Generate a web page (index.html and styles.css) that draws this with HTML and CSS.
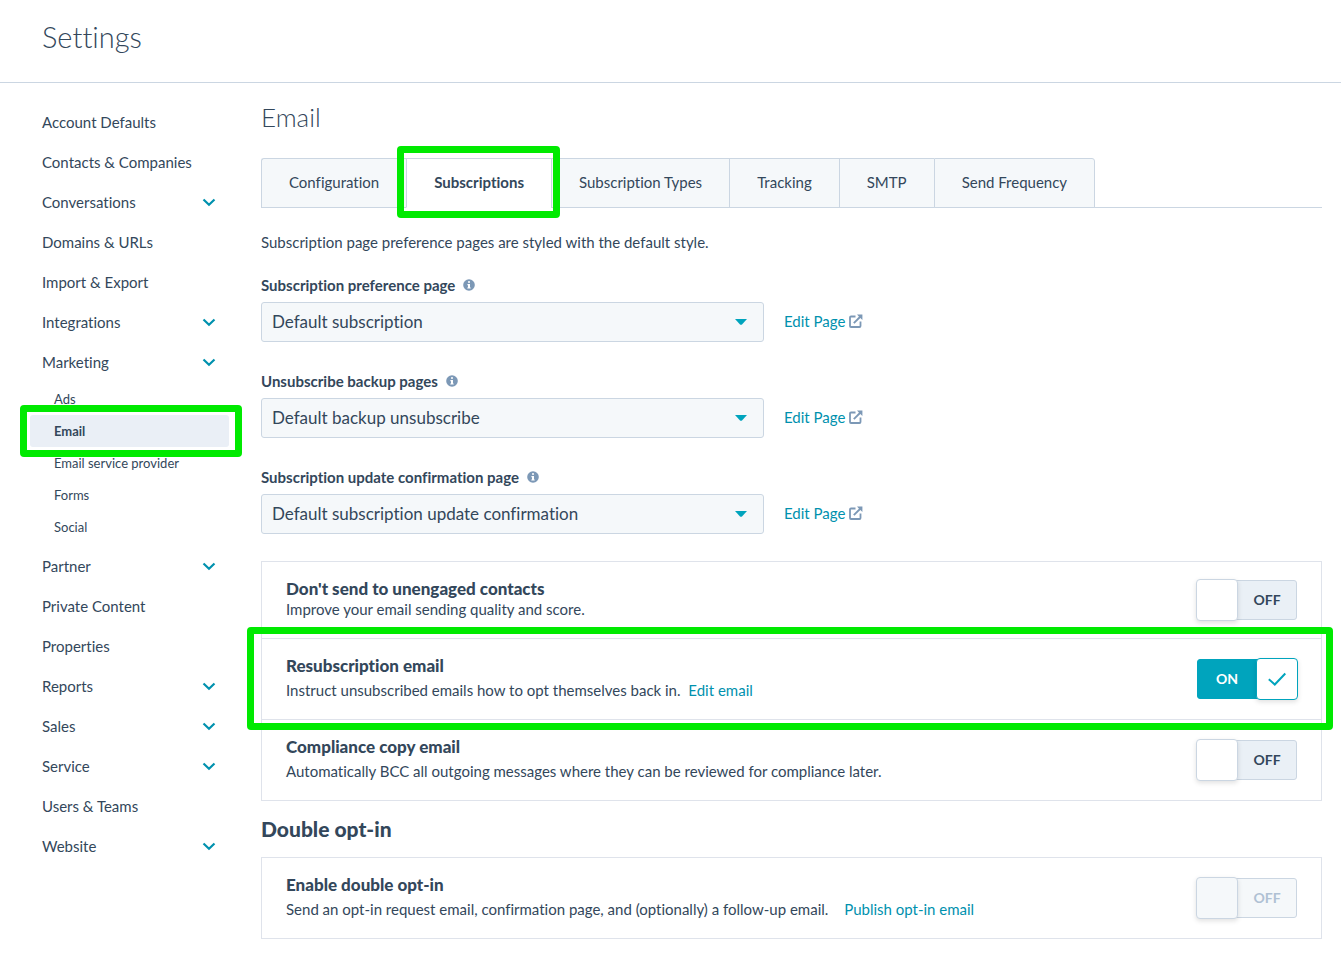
FILE: index.html
```html
<!DOCTYPE html>
<html lang="en">
<head>
    <meta charset="UTF-8">
    <meta name="viewport" content="width=device-width, initial-scale=1.0">
    <title>Settings</title>
    <link rel="stylesheet" href="styles.css">
</head>
<body>

    <!-- Shared icons -->
    <svg class="icon-defs" aria-hidden="true">
        <symbol id="chevron" viewBox="0 0 14 9">
            <path d="M1.500 1.500 L7 6.700 L12.500 1.500" fill="none" stroke="currentColor" stroke-width="2.200"/>
        </symbol>
        <symbol id="caret" viewBox="0 0 12 6">
            <path d="M0 0 H12 L7 5.4 Q6 6.2 5 5.4 Z" fill="currentColor"/>
        </symbol>
        <symbol id="info" viewBox="0 0 12 12">
            <circle cx="6" cy="6" r="5.8" fill="currentColor"/>
            <path d="M5 2.2 h2 v1.6 h-2 z M4.4 5 h2.6 v3.4 h.7 v1.2 h-3.4 v-1.2 h.7 v-2.2 h-.6 z" fill="#fff"/>
        </symbol>
        <symbol id="external" viewBox="0 0 14 14">
            <path d="M6.5 2.5 H2 Q1 2.5 1 3.500 V12 Q1 13 2 13 H10.500 Q11.500 13 11.500 12 V7.500" fill="none" stroke="currentColor" stroke-width="1.800"/>
            <path d="M4.800 9.200 L11.500 2.500" fill="none" stroke="currentColor" stroke-width="1.900"/>
            <path d="M8 .6 H13.400 V6 L11.600 4.200 L9.800 2.400 Z" fill="currentColor"/>
        </symbol>
        <symbol id="check" viewBox="0 0 18 14">
            <path d="M.8 7.200 L6.800 12.500 L17.300 1.500" fill="none" stroke="currentColor" stroke-width="2"/>
        </symbol>
    </svg>

    <header class="page-header">
        <h1>Settings</h1>
    </header>

    <div class="layout">

        <!-- Sidebar -->
        <nav class="sidebar" aria-label="Settings sections">
            <a class="nav-item" href="#">Account Defaults</a>
            <a class="nav-item" href="#">Contacts &amp; Companies</a>
            <button class="nav-item" type="button">Conversations <svg class="chevron"><use href="#chevron"/></svg></button>
            <a class="nav-item" href="#">Domains &amp; URLs</a>
            <a class="nav-item" href="#">Import &amp; Export</a>
            <button class="nav-item" type="button">Integrations <svg class="chevron"><use href="#chevron"/></svg></button>
            <button class="nav-item" type="button" aria-expanded="true">Marketing <svg class="chevron"><use href="#chevron"/></svg></button>
            <div class="subnav">
                <a class="subnav-item" href="#">Ads</a>
                <a class="subnav-item current highlight" href="#">Email</a>
                <a class="subnav-item" href="#">Email service provider</a>
                <a class="subnav-item" href="#">Forms</a>
                <a class="subnav-item" href="#">Social</a>
            </div>
            <button class="nav-item" type="button">Partner <svg class="chevron"><use href="#chevron"/></svg></button>
            <a class="nav-item" href="#">Private Content</a>
            <a class="nav-item" href="#">Properties</a>
            <button class="nav-item" type="button">Reports <svg class="chevron"><use href="#chevron"/></svg></button>
            <button class="nav-item" type="button">Sales <svg class="chevron"><use href="#chevron"/></svg></button>
            <button class="nav-item" type="button">Service <svg class="chevron"><use href="#chevron"/></svg></button>
            <a class="nav-item" href="#">Users &amp; Teams</a>
            <button class="nav-item" type="button">Website <svg class="chevron"><use href="#chevron"/></svg></button>
        </nav>

        <main class="content">
            <h2>Email</h2>

            <!-- Tabs -->
            <div class="tabs" role="tablist">
                <button class="tab" type="button" role="tab">Configuration</button>
                <button class="tab active highlight" type="button" role="tab" aria-selected="true">Subscriptions</button>
                <button class="tab" type="button" role="tab">Subscription Types</button>
                <button class="tab" type="button" role="tab">Tracking</button>
                <button class="tab" type="button" role="tab">SMTP</button>
                <button class="tab" type="button" role="tab">Send Frequency</button>
            </div>

            <p class="intro">Subscription page preference pages are styled with the default style.</p>

            <!-- Page pickers -->
            <div class="field">
                <div class="field-label">
                    <label for="preference-page">Subscription preference page</label>
                    <svg class="info"><use href="#info"/></svg>
                </div>
                <div class="field-row">
                    <div class="select">
                        <select id="preference-page"><option>Default subscription</option></select>
                        <svg class="caret"><use href="#caret"/></svg>
                    </div>
                    <a class="edit-link" href="#">Edit Page <svg class="external"><use href="#external"/></svg></a>
                </div>
            </div>
            <div class="field">
                <div class="field-label">
                    <label for="backup-page">Unsubscribe backup pages</label>
                    <svg class="info"><use href="#info"/></svg>
                </div>
                <div class="field-row">
                    <div class="select">
                        <select id="backup-page"><option>Default backup unsubscribe</option></select>
                        <svg class="caret"><use href="#caret"/></svg>
                    </div>
                    <a class="edit-link" href="#">Edit Page <svg class="external"><use href="#external"/></svg></a>
                </div>
            </div>
            <div class="field">
                <div class="field-label">
                    <label for="confirmation-page">Subscription update confirmation page</label>
                    <svg class="info"><use href="#info"/></svg>
                </div>
                <div class="field-row">
                    <div class="select">
                        <select id="confirmation-page"><option>Default subscription update confirmation</option></select>
                        <svg class="caret"><use href="#caret"/></svg>
                    </div>
                    <a class="edit-link" href="#">Edit Page <svg class="external"><use href="#external"/></svg></a>
                </div>
            </div>

            <!-- Toggles -->
            <section class="card">
                <div class="option tight">
                    <div class="option-text">
                        <h4 id="unengaged">Don't send to unengaged contacts</h4>
                        <p>Improve your email sending quality and score.</p>
                    </div>
                    <label class="switch">
                        <input type="checkbox" role="switch" aria-labelledby="unengaged">
                        <span class="state">OFF</span>
                        <span class="knob"></span>
                    </label>
                </div>
                <div class="option highlight">
                    <div class="option-text">
                        <h4 id="resubscription">Resubscription email</h4>
                        <p>Instruct unsubscribed emails how to opt themselves back in. <a class="near" href="#">Edit email</a></p>
                    </div>
                    <label class="switch on">
                        <input type="checkbox" role="switch" aria-labelledby="resubscription" checked>
                        <span class="state">ON</span>
                        <span class="knob"><svg class="check"><use href="#check"/></svg></span>
                    </label>
                </div>
                <div class="option">
                    <div class="option-text">
                        <h4 id="compliance">Compliance copy email</h4>
                        <p>Automatically BCC all outgoing messages where they can be reviewed for compliance later.</p>
                    </div>
                    <label class="switch">
                        <input type="checkbox" role="switch" aria-labelledby="compliance">
                        <span class="state">OFF</span>
                        <span class="knob"></span>
                    </label>
                </div>
            </section>

            <h3>Double opt-in</h3>

            <section class="card">
                <div class="option">
                    <div class="option-text">
                        <h4 id="double-opt-in">Enable double opt-in</h4>
                        <p>Send an opt-in request email, confirmation page, and (optionally) a follow-up email. <a class="far" href="#">Publish opt-in email</a></p>
                    </div>
                    <label class="switch disabled">
                        <input type="checkbox" role="switch" aria-labelledby="double-opt-in" disabled>
                        <span class="state">OFF</span>
                        <span class="knob"></span>
                    </label>
                </div>
            </section>
        </main>
    </div>

</body>
</html>
```
FILE: styles.css
```css
* {
    box-sizing: border-box;
}

body {
    margin: 0;
    background: #fff;
    color: #33475b;
    font-family: Lato, "Open Sans", sans-serif;
    font-size: 15px;
    font-variant-ligatures: none;
    line-height: 20px;
}

h1, h2, h3, h4, p {
    margin: 0;
}

button, select {
    font: inherit;
    font-variant-ligatures: none;
    color: inherit;
}

a {
    color: #0091ae;
    text-decoration: none;
}

svg {
    display: block;
    flex: none;
}

.icon-defs {
    position: absolute;
    width: 0;
    height: 0;
}

/* Header */
.page-header {
    padding: 19px 42px 27px;
    border-bottom: 1px solid #cbd6e2;
}

h1 {
    font-size: 29px;
    line-height: 36px;
    font-weight: 300;
}

.layout {
    display: flex;
    gap: 32px;
    padding: 19px 19px 32px 30px;
}

/* Sidebar */
.sidebar {
    flex: 0 0 199px;
}

.nav-item {
    display: flex;
    align-items: center;
    justify-content: space-between;
    width: 100%;
    height: 40px;
    padding: 0 13px 0 12px;
    border: none;
    background: none;
    color: #33475b;
    text-align: left;
    cursor: pointer;
}

.chevron {
    width: 14px;
    height: 9px;
    color: #0091ae;
}

.subnav {
    padding: 1px 0 3px;
}

.subnav-item {
    display: block;
    padding: 6px 24px;
    border-radius: 3px;
    color: #33475b;
    font-size: 13px;
}

.subnav-item.current {
    background: #eaeff6;
    font-weight: 700;
}

/* Green callout frame */
.highlight {
    position: relative;
}

.highlight::after {
    content: "";
    position: absolute;
    z-index: 2;
    inset: -13px -9px -11px -10px;
    border: 7px solid #00ea00;
    border-radius: 4px;
    pointer-events: none;
}

.subnav-item.highlight::after {
    inset: -10px -13px -10px -10px;
}

.option.highlight::after {
    inset: -12px -12px -11px -15px;
}

/* Content */
.content {
    flex: 1;
    min-width: 0;
}

h2 {
    font-size: 26px;
    line-height: 30px;
    font-weight: 300;
}

/* Tabs */
.tabs {
    display: flex;
    margin-top: 26px;
    border-bottom: 1px solid #cbd6e2;
}

.tab {
    height: 50px;
    margin-bottom: -1px;
    padding: 0 27px 2px;
    border: 1px solid #cbd6e2;
    border-right-width: 0;
    background: #f5f8fa;
    white-space: nowrap;
    cursor: pointer;
}

.tab:first-child {
    border-top-left-radius: 3px;
}

.tab:last-child {
    border-right-width: 1px;
    border-top-right-radius: 3px;
}

.tab.active {
    background: #fff;
    border-bottom-color: #fff;
    font-weight: 700;
}

.intro {
    margin: 24px 0 21px;
}

/* Fields */
.field {
    margin-bottom: 27px;
}

.field-label {
    display: flex;
    align-items: center;
    gap: 8px;
    height: 24px;
    margin-bottom: 5px;
    font-weight: 700;
}

.info {
    width: 12px;
    height: 12px;
    color: #7c98b6;
}

.field-row {
    display: flex;
    align-items: center;
    gap: 20px;
}

.select {
    position: relative;
    flex: 0 1 503px;
}

select {
    appearance: none;
    display: block;
    width: 100%;
    height: 40px;
    padding: 0 40px 0 10px;
    border: 1px solid #cbd6e2;
    border-radius: 3px;
    background: #f5f8fa;
    font-size: 17px;
}

.caret {
    position: absolute;
    top: 17px;
    right: 17px;
    width: 12px;
    height: 6px;
    color: #00a4bd;
    pointer-events: none;
}

.edit-link {
    display: flex;
    align-items: center;
    gap: 4px;
    padding-bottom: 3px;
}

.external {
    width: 14px;
    height: 14px;
    color: #7c98b6;
}

/* Cards */
.card {
    border: 1px solid #dfe3eb;
}

.option {
    display: flex;
    align-items: center;
    justify-content: space-between;
    gap: 24px;
    padding: 16px 24px 19px;
}

.option + .option {
    border-top: 1px solid #dfe3eb;
}

h4 {
    margin-bottom: 4px;
    font-size: 17px;
    line-height: 21px;
    font-weight: 900;
}

.tight h4 {
    margin-bottom: 0;
}

.near {
    margin-left: 4px;
}

.far {
    margin-left: 12px;
}

h3 {
    margin: 16px 0;
    font-size: 21px;
    line-height: 24px;
    font-weight: 900;
}

/* Switches */
.switch {
    position: relative;
    display: flex;
    flex: none;
    align-items: center;
    justify-content: center;
    width: 100px;
    height: 40px;
    margin: -2px 0 -5px;
    padding-left: 40px;
    border: 1px solid #cbd6e2;
    border-radius: 3px;
    background: #eaf0f6;
    font-size: 14px;
    font-weight: 700;
    cursor: pointer;
}

.switch input {
    position: absolute;
    inset: 0;
    margin: 0;
    opacity: 0;
}

.knob {
    position: absolute;
    top: -2px;
    left: -2px;
    display: flex;
    align-items: center;
    justify-content: center;
    width: 42px;
    height: 42px;
    border: 1px solid #cbd6e2;
    border-radius: 4px;
    background: #fff;
    box-shadow: 0 2px 5px rgba(0, 0, 0, 0.12);
}

.switch.on {
    padding: 0 40px 0 0;
    border-color: #00a4bd;
    background: #00a4bd;
    color: #fff;
}

.switch.on .knob {
    left: auto;
    right: -2px;
    border-color: #00a4bd;
}

.check {
    width: 18px;
    height: 14px;
    color: #00a4bd;
}

.switch.disabled {
    background: #f5f8fa;
    color: #b0c1d4;
    cursor: default;
}

.switch.disabled .knob {
    background: #f5f8fa;
}
```
